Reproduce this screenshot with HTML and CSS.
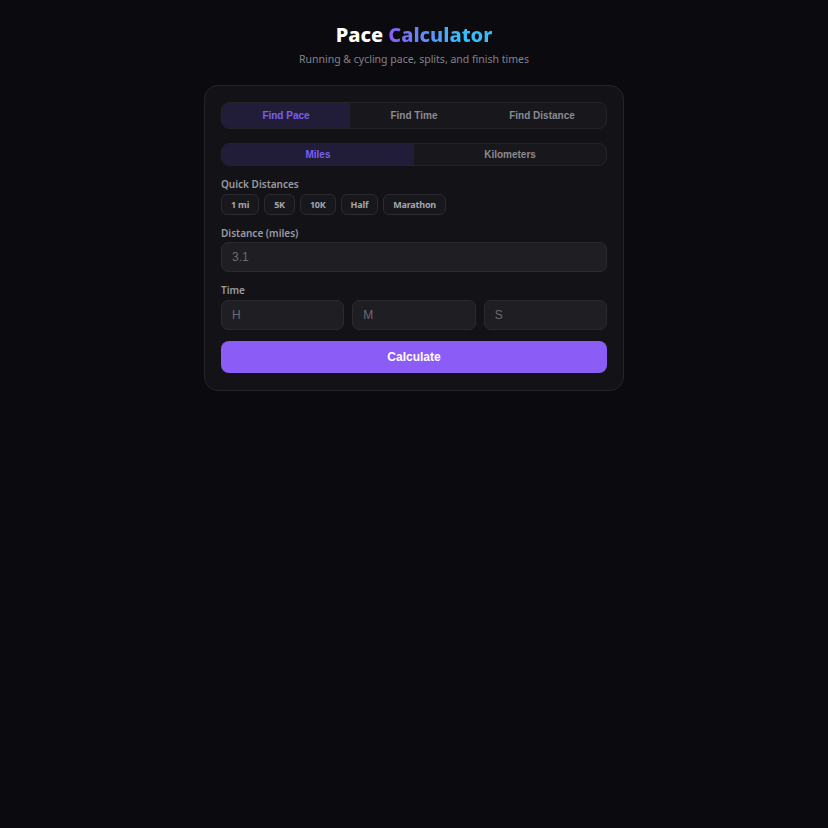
FILE: index.html
```html
<!DOCTYPE html>
<html lang="en">
<head>
<meta charset="utf-8">
<title>Pace Calculator</title>
<link rel="stylesheet" href="styles.css">
</head>
<body>
<main class="page">
  <header class="header">
    <h1 class="title"><span class="title-plain">Pace</span> <span class="title-grad">Calculator</span></h1>
    <p class="subtitle">Running &amp; cycling pace, splits, and finish times</p>
  </header>
  <section class="card">
    <div class="tabs">
      <button class="tab active">Find Pace</button>
      <button class="tab">Find Time</button>
      <button class="tab">Find Distance</button>
    </div>
    <div class="units">
      <button class="unit active">Miles</button>
      <button class="unit">Kilometers</button>
    </div>
    <div class="field">
      <label class="label">Quick Distances</label>
      <div class="chips">
        <button class="chip">1 mi</button>
        <button class="chip">5K</button>
        <button class="chip">10K</button>
        <button class="chip">Half</button>
        <button class="chip">Marathon</button>
      </div>
    </div>
    <div class="field">
      <label class="label">Distance (miles)</label>
      <input class="input" type="text" placeholder="3.1">
    </div>
    <div class="field">
      <label class="label">Time</label>
      <div class="time-row">
        <input class="input" type="text" placeholder="H">
        <input class="input" type="text" placeholder="M">
        <input class="input" type="text" placeholder="S">
      </div>
    </div>
    <button class="calc">Calculate</button>
  </section>
</main>
</body>
</html>
```

FILE: styles.css
```css
* { box-sizing: border-box; }
html, body {
  margin: 0;
  padding: 0;
  background: #0b0b0f;
  min-height: 100%;
}
body {
  font-family: "Noto Sans", "Open Sans", sans-serif;
  color: #e5e5ea;
}
.page {
  width: 420px;
  margin: 0 auto;
  padding-top: 22px;
}
.header {
  text-align: center;
  margin-bottom: 18px;
}
.title {
  margin: 0;
  font-size: 20px;
  font-weight: 800;
  line-height: 26px;
}
.title-plain { color: #ffffff; }
.title-grad {
  background: linear-gradient(90deg, #8b5cf6 0%, #38bdf8 70%);
  -webkit-background-clip: text;
  background-clip: text;
  color: transparent;
}
.subtitle {
  margin: 4px 0 0;
  font-size: 10.5px;
  line-height: 15px;
  color: #82828b;
}
.card {
  background: #131317;
  border: 1px solid #24242a;
  border-radius: 14px;
  padding: 16px 16px 17px;
  display: flex;
  flex-direction: column;
}
.tabs, .units {
  display: flex;
  background: #18181c;
  border: 1px solid #232328;
  border-radius: 8px;
  overflow: hidden;
}
.tabs { height: 27px; margin-bottom: 14px; }
.units { height: 23px; margin-bottom: 11px; }
.tab, .unit {
  flex: 1;
  border: 0;
  background: transparent;
  font-family: "Liberation Sans", Arial, sans-serif;
  font-weight: 700;
  font-size: 10px;
  color: #8a8a93;
  cursor: pointer;
  padding: 0;
}
.tab.active, .unit.active {
  background: #211d38;
  color: #7c5ff0;
}
.field {
  display: flex;
  flex-direction: column;
  margin-bottom: 11px;
}
.label {
  font-size: 10px;
  font-weight: 600;
  color: #9a9aa3;
  line-height: 14px;
  margin-bottom: 2.5px;
}
.chips {
  display: flex;
  gap: 5px;
}
.chip {
  height: 21px;
  padding: 0 9px;
  border: 1px solid #2a2a30;
  border-radius: 6px;
  background: #18181c;
  font-family: "Noto Sans", "Open Sans", sans-serif;
  font-size: 9px;
  font-weight: 700;
  color: #a5a5ae;
  letter-spacing: -0.2px;
}
.input {
  height: 30px;
  width: 100%;
  background: #1e1e23;
  border: 1px solid #2a2a30;
  border-radius: 7px;
  padding: 0 10px;
  font-family: "Liberation Sans", Arial, sans-serif;
  font-size: 12px;
  color: #e5e5ea;
  outline: none;
}
.input::placeholder { color: #6b6b73; }
.time-row {
  display: grid;
  grid-template-columns: 1fr 1fr 1fr;
  gap: 8px;
}
.calc {
  height: 32px;
  border: 0;
  border-radius: 8px;
  background: #8b5cf6;
  color: #ffffff;
  font-family: "Liberation Sans", Arial, sans-serif;
  font-weight: 700;
  font-size: 12px;
  cursor: pointer;
}
```
